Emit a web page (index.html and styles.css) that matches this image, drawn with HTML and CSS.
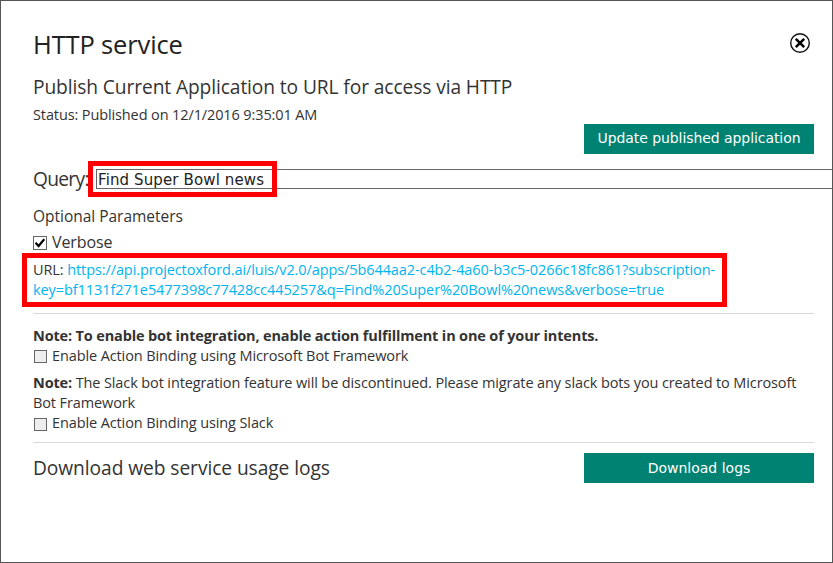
FILE: index.html
```html
<!DOCTYPE html>
<html lang="en">
<head>
<meta charset="utf-8">
<title>HTTP service</title>
<link rel="stylesheet" href="styles.css">
</head>
<body>
<main class="dialog">
  <header class="header">
    <h1 class="title">HTTP service</h1>
    <svg class="close" viewBox="0 0 22 22" role="img" aria-label="Close">
      <circle cx="11" cy="11" r="9.3" fill="none" stroke="#111" stroke-width="1.4"/>
      <path d="M6.8 6.8l8.4 8.4M15.2 6.8l-8.4 8.4" stroke="#000" stroke-width="2.5" fill="none"/>
    </svg>
  </header>
  <h2 class="subtitle">Publish Current Application to URL for access via HTTP</h2>
  <p class="status">Status: Published on 12/1/2016 9:35:01 AM</p>
  <button class="button update">Update published application</button>

  <div class="query">
    <label class="query-label" for="q">Query:</label>
    <input class="query-input" id="q" type="text" value="Find Super Bowl news">
    <span class="highlight highlight-query"></span>
  </div>

  <h3 class="optional">Optional Parameters</h3>
  <div class="option verbose">
    <span class="box checked"><svg viewBox="0 0 10 10"><path d="M0.5 4.8L3.6 8L9.3 1.2" fill="none" stroke="#000" stroke-width="2.2"/></svg></span>
    <span>Verbose</span>
  </div>
  <p class="url">URL: <a class="link">https://api.projectoxford.ai/luis/v2.0/apps/5b644aa2-c4b2-4a60-b3c5-0266c18fc861?subscription-<br><span class="url-rest">key=bf1131f271e5477398c77428cc445257&amp;q=Find%20Super%20Bowl%20news&amp;verbose=true</span></a><span class="highlight highlight-url"></span></p>

  <section class="bots">
    <p class="note"><b>Note: To enable bot integration, enable action fulfillment in one of your intents.</b></p>
    <div class="option"><span class="box"></span><span>Enable Action Binding using Microsoft Bot Framework</span></div>
    <p class="note slack-note"><b>Note:</b> The Slack bot integration feature will be discontinued. Please migrate any slack bots you created to Microsoft<br>Bot Framework</p>
    <div class="option slack"><span class="box"></span><span>Enable Action Binding using Slack</span></div>
  </section>

  <footer class="logs">
    <h2 class="logs-title">Download web service usage logs</h2>
    <button class="button download">Download logs</button>
  </footer>
</main>
</body>
</html>
```
FILE: styles.css
```css
* { box-sizing: border-box; }

body { margin: 0; background: #fff; }

h1, h2, h3, p { margin: 0; font-weight: 400; }

.dialog {
  width: 833px;
  height: 563px;
  padding: 28px 18px 0 32px;
  border: 1px solid #555;
  overflow: hidden;
  color: #333;
  font: 14.5px/20px "Open Sans", "Noto Sans", sans-serif;
  letter-spacing: -0.115px;
}

.header { display: flex; justify-content: space-between; }

.title {
  font-size: 25.5px;
  line-height: 30px;
  letter-spacing: -0.15px;
  color: #222;
}

.close { width: 22px; height: 22px; margin: 3px 3px 0 0; }

.subtitle {
  margin-top: 15px;
  font-size: 19.2px;
  line-height: 26px;
  letter-spacing: -0.1px;
}

.status { margin: 5px 0 -1px; }

.button {
  width: 230px;
  height: 30px;
  padding: 0 0 2px;
  border: 0;
  background: #008272;
  color: #fff;
  font: 14px/20px "DejaVu Sans", sans-serif;
  letter-spacing: -0.07px;
}

.update { display: block; margin-left: auto; }

.download { padding-bottom: 0; letter-spacing: 0; }

.query {
  position: relative;
  display: flex;
  align-items: flex-start;
  height: 20px;
  margin: 15px -18px 0 0;
}

.query-label {
  flex: none;
  width: 63px;
  font-size: 19.2px;
  line-height: 19px;
  letter-spacing: -0.7px;
}

.query-input {
  flex: 1;
  min-width: 0;
  height: 20px;
  padding: 2px 1px 0;
  border: 1px solid #666;
  border-right: 0;
  background: #fff;
  color: #222;
  font: 15px/16px "DejaVu Sans", sans-serif;
  letter-spacing: 0.12px;
}

.highlight { position: absolute; border: 5px solid #f00; }

.highlight-query { left: 55px; top: -8px; width: 189px; height: 36px; }

.highlight-url { left: -11px; top: -7px; width: 705px; height: 54px; }

.optional {
  margin-top: 17px;
  font-size: 15.5px;
  letter-spacing: -0.02px;
}

.option { display: flex; gap: 5px; }

.box {
  flex: none;
  width: 13px;
  height: 13px;
  margin: 4px 0 0 1px;
  border: 1px solid #666;
  background: #eee;
}

.verbose { margin-top: 6px; font-size: 16px; letter-spacing: -0.1px; }

.checked {
  width: 14px;
  height: 14px;
  margin: 4px 0 0;
  padding: 1px;
  background: #fff;
}

.checked svg { display: block; width: 10px; height: 10px; }

.url { position: relative; margin-top: 8px; letter-spacing: -0.095px; }

.link { color: #00b4f0; }

.url-rest { letter-spacing: -0.082px; }

.bots {
  height: 130px;
  margin-top: 13px;
  padding-top: 12px;
  border: solid #d9d9d9;
  border-width: 1px 0;
}

.bots b { letter-spacing: -0.155px; }

.slack-note { margin-top: 7px; }

.slack .box { margin-top: 5px; }

.logs { display: flex; justify-content: space-between; margin-top: 10px; }

.logs-title {
  font-size: 19.2px;
  line-height: 30px;
  letter-spacing: -0.07px;
}
```
